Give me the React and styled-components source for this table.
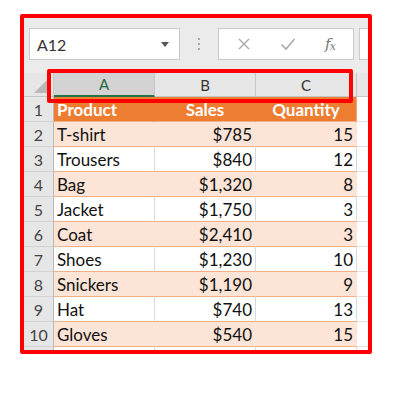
import React from "react";
import styled, { createGlobalStyle } from "styled-components";

const Global = createGlobalStyle`
  html, body { margin: 0; padding: 0; background: #ffffff; }
  body { font-family: Lato, "Liberation Sans", sans-serif; overflow: hidden; }
`;

const Page = styled.div`
  width: 414px;
  height: 394px;
  padding: 14px 0 0 20px;
  box-sizing: border-box;
  overflow: hidden;
`;

const Frame = styled.div`
  position: relative;
  width: 352px;
  height: 340px;
  box-sizing: border-box;
  border: 4px solid #ff0000;
  border-radius: 2px;
  background: #ebebeb;
  overflow: hidden;
`;

const Toolbar = styled.div`
  display: flex;
  align-items: flex-start;
  height: 55px;
  box-sizing: border-box;
  padding: 10px 0 0 5px;
`;

const Box = styled.div`
  display: flex;
  align-items: center;
  flex-shrink: 0;
  height: 32px;
  box-sizing: border-box;
  background: #ffffff;
  border: 1px solid #c9c9c9;
  width: ${(p) => p.$w}px;
  margin-left: ${(p) => p.$ml || 0}px;
`;

const NameText = styled.span`
  flex: 1;
  padding-left: 7px;
  font-size: 16px;
  color: #333;
`;

const Caret = styled.span`
  width: 0;
  height: 0;
  margin-right: 10px;
  border-left: 4.5px solid transparent;
  border-right: 4.5px solid transparent;
  border-top: 5px solid #555;
`;

const Dots = styled.div`
  width: 38px;
  height: 32px;
  display: flex;
  flex-direction: column;
  align-items: center;
  justify-content: center;
  gap: 3px;
  flex-shrink: 0;
  & > i {
    width: 2px;
    height: 2px;
    background: #a8a8a8;
    display: block;
  }
`;

const IconSlot = styled.span`
  display: flex;
  align-items: center;
  justify-content: center;
  width: ${(p) => p.$w}px;
  height: 30px;
  color: #a6a6a6;
`;

const Fx = styled.span`
  font-family: "DejaVu Serif", "Liberation Serif", serif;
  font-style: italic;
  font-size: 15px;
  color: #777;
  letter-spacing: -1px;
  & > sub {
    font-size: 11px;
    vertical-align: -1px;
  }
`;

const Grid = styled.div`
  display: grid;
  grid-template-columns: 30px 101px 101px 101px 30px;
  grid-template-rows: 24px repeat(11, 25px);
`;

const Corner = styled.div`
  position: relative;
  background: #e6e6e6;
  border-right: 1px solid #c6c6c6;
  border-bottom: 1px solid #c6c6c6;
  box-sizing: border-box;
  &::after {
    content: "";
    position: absolute;
    right: 3px;
    bottom: 3px;
    width: 0;
    height: 0;
    border-left: 16px solid transparent;
    border-bottom: 16px solid #b8b8b8;
  }
`;

const ColHead = styled.div`
  display: flex;
  align-items: center;
  justify-content: center;
  box-sizing: border-box;
  background: ${(p) => (p.$sel ? "#d3d3d3" : "#e6e6e6")};
  border-right: 1px solid #c6c6c6;
  border-bottom: ${(p) => (p.$sel ? "2px solid #217346" : "1px solid #c6c6c6")};
  color: ${(p) => (p.$sel ? "#1e6b41" : "#333")};
  font-size: 15px;
`;

const RowHead = styled.div`
  display: flex;
  align-items: center;
  justify-content: center;
  box-sizing: border-box;
  background: #e6e6e6;
  border-right: 1px solid #b9b9b9;
  border-bottom: 1px solid #d2d2d2;
  color: #444;
  font-size: 16px;
`;

const Cell = styled.div`
  display: flex;
  align-items: center;
  box-sizing: border-box;
  padding: 0 3px 0 3px;
  font-size: 17px;
  white-space: nowrap;
  overflow: hidden;
  justify-content: ${(p) =>
    p.$align === "right" ? "flex-end" : p.$align === "center" ? "center" : "flex-start"};
  ${(p) =>
    p.$kind === "head"
      ? `background: #ed7d31; color: #ffffff; font-weight: 700; border-bottom: 1px solid #f4b084; border-right: 1px solid ${
          p.$sep ? "#f3a673" : "#ed7d31"
        };`
      : p.$kind === "band"
      ? `background: #fce4d6; color: #111; border-bottom: 1px solid #f4b084; border-right: 1px solid #fce4d6;`
      : p.$kind === "plain"
      ? `background: #ffffff; color: #111; border-bottom: 1px solid #f4b084; border-right: 1px solid #d9d9d9;`
      : `background: #ffffff; border-bottom: 1px solid #e0e0e0; border-right: 1px solid #d9d9d9;`}
`;

const Highlight = styled.div`
  position: absolute;
  left: 23px;
  top: 51px;
  width: 306px;
  height: 34px;
  box-sizing: border-box;
  border: 4px solid #ff0000;
  border-radius: 2px;
  pointer-events: none;
`;

const Caption = styled.div`
  width: 352px;
  margin-top: 37px;
  text-align: center;
  font-size: 17px;
  line-height: 20px;
  color: #8a8a8a;
  white-space: nowrap;
`;

const data = [
  ["T-shirt", "$785", "15"],
  ["Trousers", "$840", "12"],
  ["Bag", "$1,320", "8"],
  ["Jacket", "$1,750", "3"],
  ["Coat", "$2,410", "3"],
  ["Shoes", "$1,230", "10"],
  ["Snickers", "$1,190", "9"],
  ["Hat", "$740", "13"],
  ["Gloves", "$540", "15"],
];

export default function App() {
  return (
    <>
      <Global />
      <Page>
        <Frame>
          <Toolbar>
            <Box $w={151}>
              <NameText>A12</NameText>
              <Caret />
            </Box>
            <Dots>
              <i />
              <i />
              <i />
            </Dots>
            <Box $w={136}>
              <IconSlot $w={50}>
                <svg width="14" height="14" viewBox="0 0 14 14">
                  <path d="M2 2 L12 12 M12 2 L2 12" stroke="#a9a9a9" strokeWidth="1.4" fill="none" />
                </svg>
              </IconSlot>
              <IconSlot $w={38}>
                <svg width="16" height="14" viewBox="0 0 16 14">
                  <path d="M1.5 7.5 L6 12 L14.5 2" stroke="#a9a9a9" strokeWidth="1.6" fill="none" />
                </svg>
              </IconSlot>
              <IconSlot $w={46}>
                <Fx>
                  f<sub>x</sub>
                </Fx>
              </IconSlot>
            </Box>
            <Box $w={30} $ml={5} />
          </Toolbar>
          <Grid>
            <Corner />
            <ColHead $sel>A</ColHead>
            <ColHead>B</ColHead>
            <ColHead>C</ColHead>
            <ColHead />

            <RowHead>1</RowHead>
            <Cell $kind="head">Product</Cell>
            <Cell $kind="head" $align="center">Sales</Cell>
            <Cell $kind="head" $align="center" $sep>
              Quantity
            </Cell>
            <Cell $kind="empty" />

            {data.map((r, i) => {
              const kind = i % 2 === 0 ? "band" : "plain";
              return (
                <React.Fragment key={r[0]}>
                  <RowHead>{i + 2}</RowHead>
                  <Cell $kind={kind}>{r[0]}</Cell>
                  <Cell $kind={kind} $align="right">{r[1]}</Cell>
                  <Cell $kind={kind} $align="right">{r[2]}</Cell>
                  <Cell $kind="empty" />
                </React.Fragment>
              );
            })}

            <RowHead />
            <Cell $kind="empty" />
            <Cell $kind="empty" />
            <Cell $kind="empty" />
            <Cell $kind="empty" />
          </Grid>
          <Highlight />
        </Frame>
        <Caption>The selected column headers of the table</Caption>
      </Page>
    </>
  );
}
